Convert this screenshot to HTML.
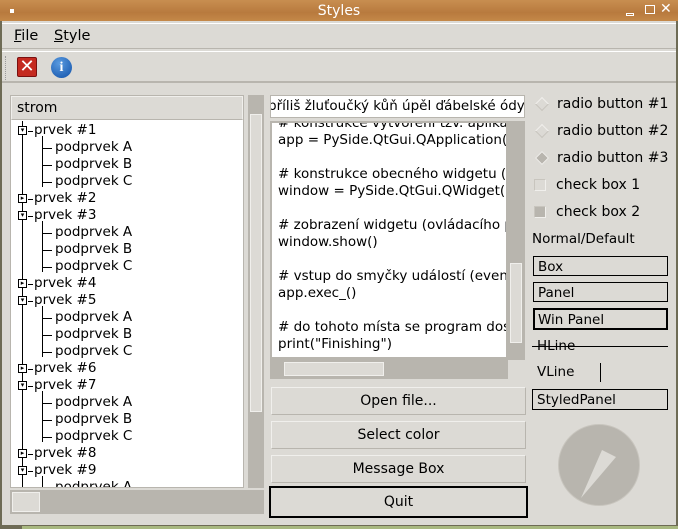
<!DOCTYPE html>
<html><head><meta charset="utf-8"><style>
*{margin:0;padding:0;box-sizing:border-box}
body{width:678px;height:529px;overflow:hidden;background:#dcdad5;font-family:"DejaVu Sans","Liberation Sans",sans-serif;font-size:13px;color:#000;position:relative}
.a{position:absolute}
.title{left:0;top:0;width:678px;height:21px;background:linear-gradient(#c88e50,#b87a3e 60%,#c48848);color:#fff;text-align:center;line-height:22px;font-size:14px}
.btn{position:absolute;background:#dcdad5;border:1px solid #b8b5ae;border-top-color:#f0efec;border-left-color:#f0efec;text-align:center;line-height:26px}
.frame{position:absolute;border:1px solid #000;padding-left:4px;line-height:18px;font-size:13.5px}
.box{position:absolute;width:9px;height:9px;border:1px solid #000;background:#fff}
.code div{height:17px;white-space:nowrap;font-size:13.5px}
</style></head><body>
<div class="a title">Styles</div>
<div class="a" style="left:10px;top:9px;width:4px;height:4px;background:#fff"></div>
<div class="a" style="left:626px;top:13px;width:8px;height:3px;border:1px solid #fff"></div>
<div class="a" style="left:645px;top:5px;width:10px;height:9px;border:1.5px solid #fff"></div>
<div class="a" style="left:660px;top:1px;color:#fff;font-size:14px">✕</div>
<div class="a" style="left:0;top:21px;width:678px;height:508px;border-left:2px solid #6e6b55;border-right:2px solid #6e6b55"></div>
<div class="a" style="left:2px;top:23px;width:674px;height:26px;border-top:1px solid #fff;border-bottom:1px solid #b8b5ae"></div>
<div class="a" style="left:14px;top:28px;font-size:14.5px"><u>F</u>ile</div>
<div class="a" style="left:54px;top:28px;font-size:14.5px"><u>S</u>tyle</div>
<div class="a" style="left:2px;top:51px;width:674px;height:32px;border-top:1px solid #fff;border-bottom:2px solid #b8b5ae"></div>
<div class="a" style="left:5px;top:56px;width:3px;height:24px;border-left:1px dotted #999"></div>
<div class="a" style="left:17px;top:57px;width:20px;height:20px;background:#c42a20;border:1px solid #7a1010;border-radius:2px;color:#fff;font-size:18px;line-height:18px;text-align:center;font-weight:bold">✕</div>
<div class="a" style="left:51px;top:57px;width:21px;height:21px;border-radius:50%;background:radial-gradient(circle at 40% 30%,#5a9be0,#1050a8);color:#fff;font-weight:bold;font-size:14px;line-height:21px;text-align:center;font-family:'Liberation Serif',serif">i</div>
<div class="a" style="left:10px;top:95px;width:234px;height:393px;background:#fff;border:1px solid #b8b5ae"></div>
<div class="a" style="left:11px;top:96px;width:232px;height:24px;background:#dcdad5;border:1px solid #f0efec;border-bottom-color:#b8b5ae;padding-left:5px;line-height:23px;font-size:14px">strom</div>
<div class="a" style="left:11px;top:121px;width:232px;height:366px;overflow:hidden" id="t"></div>
<div class="a" style="left:248px;top:95px;width:16px;height:393px;background:#b8b5ae"></div>
<div class="a" style="left:250px;top:114px;width:12px;height:298px;background:#dcdad5;border:1px solid #f0efec"></div>
<div class="a" style="left:10px;top:490px;width:254px;height:24px;background:#b8b5ae"></div>
<div class="a" style="left:12px;top:492px;width:28px;height:20px;background:#dcdad5;border:1px solid #f0efec"></div>
<div class="a" style="left:270px;top:95px;width:255px;height:23px;background:#fff;border:1px solid #b8b5ae;overflow:hidden;white-space:nowrap;line-height:21px;font-size:13.5px"><span style="margin-left:-3px">příliš žluťoučký kůň úpěl ďábelské ódy</span></div>
<div class="a" style="left:270px;top:121px;width:255px;height:258px;background:#b8b5ae;border:1px solid #b8b5ae"></div>
<div class="a code" style="left:272px;top:123px;width:234px;height:234px;background:#fff;overflow:hidden;padding:0 0 0 6px">
<div style="margin-top:-8px"># konstrukce vytvořeni tzv. aplikace</div><div>app = PySide.QtGui.QApplication(sys.argv)</div><div></div>
<div># konstrukce obecného widgetu (okna)</div><div>window = PySide.QtGui.QWidget()</div><div></div>
<div># zobrazení widgetu (ovládacího prvku)</div><div>window.show()</div><div></div>
<div># vstup do smyčky událostí (event loop)</div><div>app.exec_()</div><div></div>
<div># do tohoto místa se program dostane</div><div>print("Finishing")</div></div>
<div class="a" style="left:510px;top:263px;width:12px;height:80px;background:#dcdad5;border:1px solid #f0efec"></div>
<div class="a" style="left:284px;top:362px;width:100px;height:14px;background:#dcdad5;border:1px solid #f0efec"></div>
<div class="a" style="left:508px;top:360px;width:17px;height:19px;background:#dcdad5"></div>
<div class="btn" style="left:271px;top:387px;width:255px;height:28px;font-size:14px">Open file...</div>
<div class="btn" style="left:271px;top:421px;width:255px;height:28px;font-size:14px">Select color</div>
<div class="btn" style="left:271px;top:455px;width:255px;height:28px;font-size:14px">Message Box</div>
<div class="btn" style="left:269px;top:486px;width:259px;height:32px;border:2px solid #000;line-height:28px;font-size:14px">Quit</div>
<div class="a" style="left:537px;top:99px;width:10px;height:10px;transform:rotate(45deg);border:1px solid #f0efec;border-right-color:#c8c5be;border-bottom-color:#c8c5be;background:#dcdad5"></div>
<div class="a" style="left:537px;top:126px;width:10px;height:10px;transform:rotate(45deg);border:1px solid #f0efec;border-right-color:#c8c5be;border-bottom-color:#c8c5be;background:#dcdad5"></div>
<div class="a" style="left:537px;top:153px;width:10px;height:10px;transform:rotate(45deg);border:1px solid #f0efec;background:#b8b5ae"></div>
<div class="a" style="left:534px;top:179px;width:12px;height:12px;border:1px solid #c8c5be;border-right-color:#f0efec;border-bottom-color:#f0efec"></div>
<div class="a" style="left:534px;top:206px;width:12px;height:12px;background:#b8b5ae;border:1px solid #c8c5be;border-right-color:#f0efec;border-bottom-color:#f0efec"></div>
<div class="a" style="left:557px;top:96px;font-size:14px">radio button #1</div>
<div class="a" style="left:557px;top:123px;font-size:14px">radio button #2</div>
<div class="a" style="left:557px;top:150px;font-size:14px">radio button #3</div>
<div class="a" style="left:556px;top:177px;font-size:14px">check box 1</div>
<div class="a" style="left:556px;top:204px;font-size:14px">check box 2</div>
<div class="a" style="left:532px;top:231px;font-size:13.5px">Normal/Default</div>
<div class="frame" style="left:533px;top:256px;width:135px;height:20px;padding-top:1px">Box</div>
<div class="frame" style="left:533px;top:282px;width:135px;height:20px;padding-top:1px">Panel</div>
<div class="frame" style="left:533px;top:308px;width:135px;height:22px;border-width:2px;padding-left:3px;padding-top:1px">Win Panel</div>
<div class="a" style="left:537px;top:338px;font-size:13.5px">HLine</div>
<div class="a" style="left:532px;top:346px;width:136px;height:1px;background:#000"></div>
<div class="a" style="left:537px;top:364px;font-size:13.5px">VLine</div>
<div class="a" style="left:600px;top:363px;width:1px;height:19px;background:#000"></div>
<div class="frame" style="left:532px;top:389px;width:136px;height:21px;padding-top:1px">StyledPanel</div>
<div class="a" style="left:558px;top:424px;width:82px;height:82px;border-radius:50%;background:#b8b5ae;border:1px solid #c8c5be"></div>
<svg class="a" style="left:558px;top:424px" width="82" height="82"><polygon points="58,33 44,26 23,74" fill="#dcdad5"/></svg>
<div class="a" style="left:0;top:525px;width:678px;height:4px;background:#6e6b55"></div>
<div class="a" style="left:22px;top:526px;width:656px;height:3px;background:#a8b880"></div>
<script>
var rows=[["prvek #1",0,"d"],["podprvek A",1],["podprvek B",1],["podprvek C",1,"l"],["prvek #2",0,"r"],["prvek #3",0,"d"],["podprvek A",1],["podprvek B",1],["podprvek C",1,"l"],["prvek #4",0,"r"],["prvek #5",0,"d"],["podprvek A",1],["podprvek B",1],["podprvek C",1,"l"],["prvek #6",0,"r"],["prvek #7",0,"d"],["podprvek A",1],["podprvek B",1],["podprvek C",1,"l"],["prvek #8",0,"r"],["prvek #9",0,"d"],["podprvek A",1]];
var t=document.getElementById('t'),h='<div style="position:absolute;left:11px;top:0;width:1px;height:366px;background:#000"></div>';
rows.forEach(function(r,i){var y=i*17+1;
if(r[1]==0){h+='<div class="box" style="left:7px;top:'+(y+4)+'px;font-size:7px;line-height:7px;text-align:center">'+(r[2]=="d"?"▾":"▸")+'</div><div style="position:absolute;left:17px;top:'+(y+9)+'px;width:5px;height:1px;background:#000"></div><div style="position:absolute;left:23px;top:'+y+'px;font-size:13.5px;white-space:nowrap">'+r[0]+'</div>';
if(r[2]=="d")h+='<div style="position:absolute;left:31px;top:'+(y+14)+'px;width:1px;height:51px;background:#000"></div>';}
else{h+='<div style="position:absolute;left:31px;top:'+(y+9)+'px;width:10px;height:1px;background:#000"></div><div style="position:absolute;left:44px;top:'+y+'px;font-size:13.5px;white-space:nowrap">'+r[0]+'</div>';}
});t.innerHTML=h;
</script>
</body></html>
